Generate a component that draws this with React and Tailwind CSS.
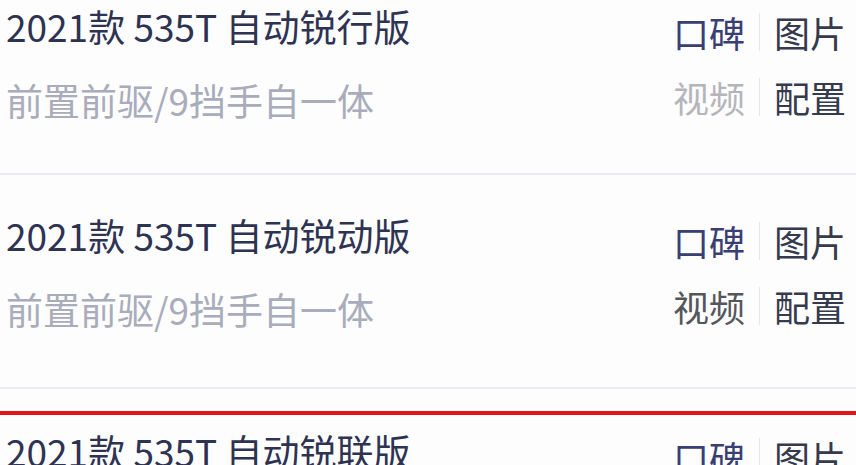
export default function App() {
  const font = { fontFamily: '"Noto Sans CJK SC", "Noto Sans", sans-serif' };
  const Row = ({ title, sub, videoDim, first }) => (
    <div className={`flex justify-between border-b-2 border-[#ececf0] pl-[6px] pr-[10px] ${first ? 'pt-[2px] pb-[49px]' : 'pt-[36px] pb-[54px]'}`}>
      <div className="flex flex-col gap-[26px]">
        <div className="text-[37px] leading-[48px] text-[#2e3352]">{title}</div>
        <div className="text-[37px] leading-[48px] text-[#a9acba]">{sub}</div>
      </div>
      <div className="flex flex-col gap-[17px] pt-[6px]">
        <div className="flex items-center text-[36px] leading-[48px]">
          <span className="text-[#3a3f73]">口碑</span>
          <span className="mx-[14px] w-[1px] h-[38px] bg-[#e6e6ea]" />
          <span className="text-[#353a4c]">图片</span>
        </div>
        <div className="flex items-center text-[36px] leading-[48px]">
          <span className={videoDim ? 'text-[#b4b5ba]' : 'text-[#55565c]'}>视频</span>
          <span className="mx-[14px] w-[1px] h-[38px] bg-[#e6e6ea]" />
          <span className="text-[#353a4c]">配置</span>
        </div>
      </div>
    </div>
  );
  return (
    <div className="w-[856px] h-[465px] overflow-hidden bg-[#fdfdfe]" style={font}>
      <Row first title="2021款 535T 自动锐行版" sub="前置前驱/9挡手自一体" videoDim />
      <Row title="2021款 535T 自动锐动版" sub="前置前驱/9挡手自一体" />
      <div className="h-[22px]" />
      <div className="h-[4px] bg-[#e3141a]" />
      <div className="flex justify-between pl-[6px] pr-[10px] pt-[12px]">
        <div className="text-[37px] leading-[48px] text-[#2e3352]">2021款 535T 自动锐联版</div>
        <div className="flex items-center text-[36px] leading-[48px] pt-[6px]">
          <span className="text-[#3a3f73]">口碑</span>
          <span className="mx-[14px] w-[1px] h-[38px] bg-[#e6e6ea]" />
          <span className="text-[#353a4c]">图片</span>
        </div>
      </div>
    </div>
  );
}
